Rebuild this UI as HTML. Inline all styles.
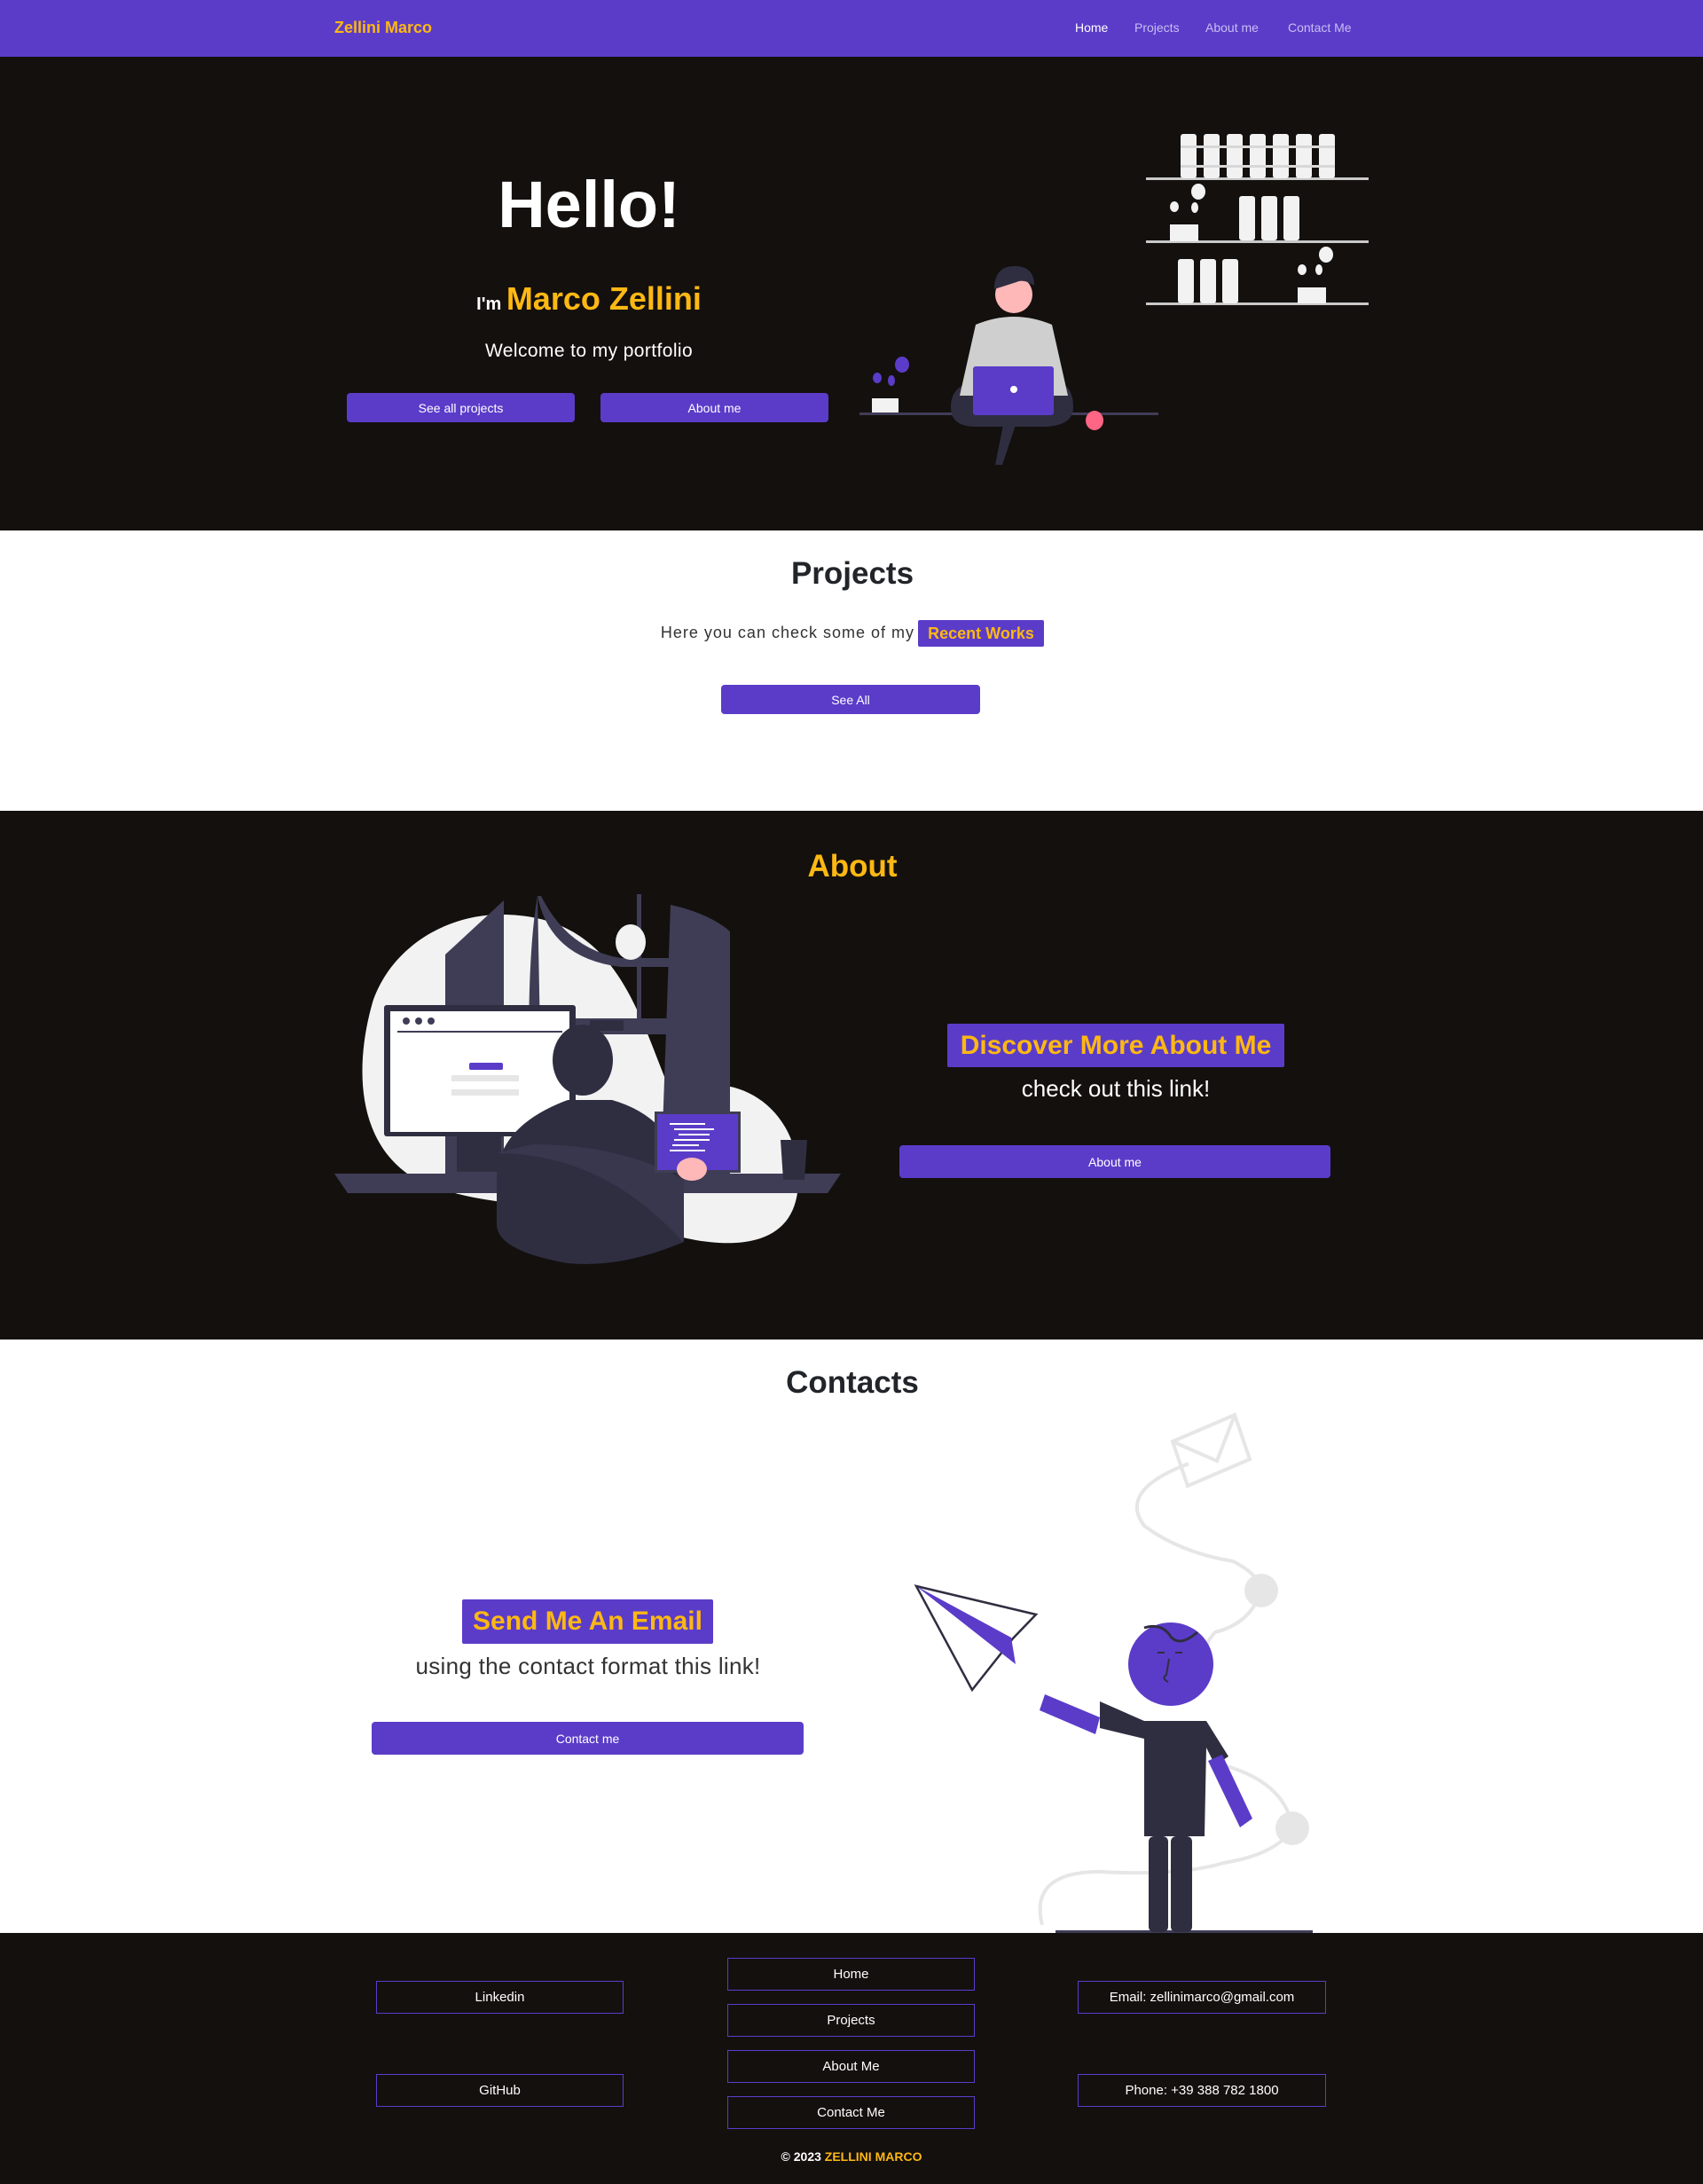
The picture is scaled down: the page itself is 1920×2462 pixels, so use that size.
<!DOCTYPE html>
<html><head><meta charset="utf-8"><style>
*{margin:0;padding:0;box-sizing:border-box}
body{width:1920px;height:2462px;font-family:"Liberation Sans",sans-serif;background:#fff;position:relative;overflow:hidden}
.abs{position:absolute}
.c{position:absolute;transform:translateX(-50%);white-space:nowrap;text-align:center}
.btn{position:absolute;background:#5b3cc9;color:#fff;font-size:14px;display:flex;align-items:center;justify-content:center;border-radius:4px}
.fb{position:absolute;border:1.5px solid #5b3cc9;color:#fff;font-size:15px;display:flex;align-items:center;justify-content:center}
.y{color:#fdb813}
.badge{position:absolute;background:#5b3cc9;color:#fdb813;font-weight:bold;display:flex;align-items:center;justify-content:center;border-radius:2px}
</style></head><body>
<!-- nav -->
<div class="abs" style="left:0;top:0;width:1920px;height:64px;background:#5b3cc9"></div>
<div class="abs y" style="left:377px;top:21px;font-size:18px;font-weight:bold">Zellini Marco</div>
<div class="abs" style="left:1212px;top:23px;font-size:14px;color:#fff">Home</div>
<div class="abs" style="left:1279px;top:23px;font-size:14px;color:#c9bdf2">Projects</div>
<div class="abs" style="left:1359px;top:23px;font-size:14px;color:#c9bdf2">About me</div>
<div class="abs" style="left:1452px;top:23px;font-size:14px;color:#c9bdf2">Contact Me</div>

<!-- hero -->
<div class="abs" style="left:0;top:64px;width:1920px;height:534px;background:#14100e"></div>
<div class="c" style="left:664px;top:188px;font-size:74px;font-weight:bold;color:#fff">Hello!</div>
<div class="c" style="left:664px;top:316px;color:#fff;font-size:20px"><span style="font-weight:bold">I'm</span> <span class="y" style="font-size:36px;font-weight:bold">Marco Zellini</span></div>
<div class="c" style="left:664px;top:384px;font-size:21px;color:#fff;letter-spacing:0.4px">Welcome to my portfolio</div>
<div class="btn" style="left:391px;top:443px;width:257px;height:33px">See all projects</div>
<div class="btn" style="left:677px;top:443px;width:257px;height:33px">About me</div>
<svg class="abs" style="left:0;top:64px" width="1920" height="534" viewBox="0 0 1920 534">
<g fill="#c9c9c9"><rect x="1292" y="136" width="251" height="3"/><rect x="1292" y="207" width="251" height="3"/><rect x="1292" y="277" width="251" height="3"/></g>
<g fill="#f2f2f2">
<rect x="1331" y="87" width="18" height="50" rx="3"/><rect x="1357" y="87" width="18" height="50" rx="3"/><rect x="1383" y="87" width="18" height="50" rx="3"/><rect x="1409" y="87" width="18" height="50" rx="3"/><rect x="1435" y="87" width="18" height="50" rx="3"/><rect x="1461" y="87" width="18" height="50" rx="3"/><rect x="1487" y="87" width="18" height="50" rx="3"/>
<rect x="1397" y="157" width="18" height="50" rx="3"/><rect x="1422" y="157" width="18" height="50" rx="3"/><rect x="1447" y="157" width="18" height="50" rx="3"/>
<rect x="1328" y="228" width="18" height="50" rx="3"/><rect x="1353" y="228" width="18" height="50" rx="3"/><rect x="1378" y="228" width="18" height="50" rx="3"/>
<rect x="1319" y="189" width="32" height="19"/><ellipse cx="1351" cy="152" rx="8" ry="9"/><ellipse cx="1324" cy="169" rx="5" ry="6"/><ellipse cx="1347" cy="170" rx="4" ry="6"/>
<rect x="1463" y="260" width="32" height="18"/><ellipse cx="1495" cy="223" rx="8" ry="9"/><ellipse cx="1468" cy="240" rx="5" ry="6"/><ellipse cx="1487" cy="240" rx="4" ry="6"/>
<rect x="983" y="385" width="30" height="17"/></g>
<g fill="#d8d8d8"><rect x="1331" y="100" width="174" height="3"/><rect x="1331" y="122" width="174" height="3"/></g>
<rect x="969" y="401" width="337" height="3" fill="#3f3d56"/>
<ellipse cx="1017" cy="347" rx="8" ry="9" fill="#5b3cc9"/><ellipse cx="989" cy="362" rx="5" ry="6" fill="#5b3cc9"/><ellipse cx="1005" cy="365" rx="4" ry="6" fill="#5b3cc9"/>
<path d="M1072 395 q0 -30 40 -30 h70 q28 0 28 30 q0 20 -30 22 h-80 q-28 0 -28 -22z" fill="#2f2e41"/>
<path d="M1132 410 l-10 50 l8 0 l15 -45z" fill="#2f2e41"/>
<path d="M1100 302 q43 -18 86 0 l18 80 h-122z" fill="#cfcfcf"/>
<circle cx="1143" cy="268" r="21" fill="#ffb8b8"/>
<path d="M1121 262 q0 -26 23 -26 q22 0 22 22 q-12 -8 -20 -4 q-12 4 -25 8z" fill="#2f2e41"/>
<rect x="1097" y="349" width="91" height="55" rx="3" fill="#5b3cc9"/>
<circle cx="1143" cy="375" r="4" fill="#fff"/>
<ellipse cx="1234" cy="410" rx="10" ry="11" fill="#ff6584"/>
</svg>

<!-- projects -->
<div class="c" style="left:961px;top:627px;font-size:35px;font-weight:bold;color:#212529">Projects</div>
<div class="abs" style="right:889px;top:703px;font-size:18px;color:#333;white-space:nowrap;letter-spacing:1px">Here you can check some of my</div>
<div class="badge" style="left:1035px;top:699px;width:142px;height:30px;font-size:18px">Recent Works</div>
<div class="btn" style="left:813px;top:772px;width:292px;height:33px">See All</div>

<!-- about -->
<div class="abs" style="left:0;top:914px;width:1920px;height:596px;background:#14100e"></div>
<div class="c y" style="left:961px;top:957px;font-size:35px;font-weight:bold">About</div>
<svg class="abs" style="left:0;top:914px" width="1920" height="596" viewBox="0 914 1920 596">
<path d="M565 1031 C700 1031 720 1150 760 1240 C800 1200 900 1230 900 1330 C900 1420 800 1410 720 1380 C650 1350 560 1370 470 1330 C400 1290 400 1200 420 1130 C440 1070 500 1031 565 1031z" fill="#f2f2f2"/>
<path d="M502 1076 L568 1015 L568 1330 L502 1330z" fill="#3f3d56"/>
<path d="M606 1010 L612 1330 L600 1330 Q590 1100 606 1010z" fill="#3f3d56"/>
<path d="M606 1010 Q620 1080 700 1090 L760 1090 L760 1080 L700 1080 Q640 1070 610 1010z" fill="#3f3d56"/>
<path d="M756 1020 Q800 1030 823 1050 L823 1330 L745 1330z" fill="#3f3d56"/>
<rect x="718" y="1008" width="5" height="150" fill="#3f3d56"/>
<ellipse cx="711" cy="1062" rx="17" ry="20" fill="#f2f2f2"/>
<rect x="620" y="1148" width="200" height="18" fill="#3f3d56"/>
<rect x="433" y="1133" width="216" height="148" rx="3" fill="#2f2e41"/>
<rect x="440" y="1140" width="202" height="136" fill="#fff"/>
<rect x="448" y="1162" width="186" height="2" fill="#3f3d56"/>
<circle cx="458" cy="1151" r="4" fill="#3f3d56"/><circle cx="472" cy="1151" r="4" fill="#3f3d56"/><circle cx="486" cy="1151" r="4" fill="#3f3d56"/>
<rect x="529" y="1198" width="38" height="8" rx="2" fill="#5b3cc9"/>
<rect x="509" y="1212" width="76" height="7" fill="#e6e6e6"/><rect x="509" y="1228" width="76" height="7" fill="#e6e6e6"/>
<rect x="515" y="1281" width="50" height="40" fill="#2f2e41"/>
<path d="M377 1323 H948 L933 1345 H392z" fill="#3f3d56"/>
<path d="M560 1330 Q560 1270 640 1240 L690 1240 Q760 1260 771 1330 L771 1400 Q700 1430 640 1424 Q560 1410 560 1380z" fill="#2f2e41"/>
<path d="M560 1300 Q680 1300 770 1400 L771 1330 Q700 1290 600 1290z" fill="#3f3d56" opacity=".6"/>
<ellipse cx="657" cy="1195" rx="34" ry="40" fill="#2f2e41"/>
<rect x="665" y="1150" width="38" height="12" fill="#2f2e41"/>
<rect x="738" y="1253" width="97" height="69" fill="#3f3d56"/>
<rect x="741" y="1256" width="91" height="63" fill="#5b3cc9"/>
<g fill="#fff"><rect x="755" y="1266" width="40" height="2"/><rect x="760" y="1272" width="45" height="2"/><rect x="765" y="1278" width="35" height="2"/><rect x="760" y="1284" width="40" height="2"/><rect x="758" y="1290" width="30" height="2"/><rect x="755" y="1296" width="40" height="2"/></g>
<ellipse cx="780" cy="1318" rx="17" ry="13" fill="#ffb8b8"/>
<path d="M880 1285 h30 l-3 45 h-24z" fill="#2f2e41"/>
</svg>
<div class="badge" style="left:1068px;top:1154px;width:380px;height:49px;font-size:30px">Discover More About Me</div>
<div class="c" style="left:1258px;top:1212px;font-size:26px;color:#fff">check out this link!</div>
<div class="btn" style="left:1014px;top:1291px;width:486px;height:37px">About me</div>

<!-- contacts -->
<div class="c" style="left:961px;top:1539px;font-size:35px;font-weight:bold;color:#212529">Contacts</div>
<div class="badge" style="left:521px;top:1803px;width:283px;height:50px;font-size:30px">Send Me An Email</div>
<div class="c" style="left:663px;top:1863px;font-size:26px;color:#333;letter-spacing:0.3px">using the contact format this link!</div>
<div class="btn" style="left:419px;top:1941px;width:487px;height:37px">Contact me</div>
<svg class="abs" style="left:0;top:1510px" width="1920" height="669" viewBox="0 1510 1920 669">
<g fill="none" stroke="#e6e6e6" stroke-width="4">
<path d="M1340 1650 Q1260 1680 1290 1720 Q1330 1750 1390 1760 Q1420 1775 1422 1793 Q1410 1830 1370 1840 Q1350 1860 1360 1900"/>
<path d="M1380 1990 Q1450 2010 1457 2061 Q1440 2090 1380 2100 Q1330 2115 1240 2110 Q1160 2110 1175 2170"/>
<path d="M1322 1625 l70 -30 l17 50 l-70 30z M1322 1625 l50 22 l20 -52"/>
</g>
<ellipse cx="1422" cy="1793" rx="19" ry="19" fill="#e6e6e6"/>
<ellipse cx="1457" cy="2061" rx="19" ry="19" fill="#e6e6e6"/>
<path d="M1033 1788 L1168 1820 L1142 1847 L1096 1905z" fill="#fff" stroke="#2f2e41" stroke-width="2.5"/>
<path d="M1033 1788 L1140 1846 L1145 1876z" fill="#5b3cc9"/>
<rect x="1190" y="2176" width="290" height="3" fill="#3f3d56"/>
<path d="M1178 1910 L1240 1936 L1235 1955 L1172 1928z" fill="#5b3cc9"/>
<path d="M1240 1918 L1290 1940 L1360 1940 L1385 1980 L1370 1990 L1360 1970 L1358 2070 L1290 2070 L1290 1960 L1240 1948z" fill="#2f2e41"/>
<path d="M1362 1985 L1378 1978 L1412 2050 L1398 2060z" fill="#5b3cc9"/>
<rect x="1295" y="2070" width="22" height="108" rx="6" fill="#2f2e41"/>
<rect x="1320" y="2070" width="24" height="108" rx="6" fill="#2f2e41"/>
<ellipse cx="1320" cy="1876" rx="48" ry="47" fill="#5b3cc9"/>
<path d="M1290 1835 q20 -6 30 10 q10 12 30 -5" fill="none" stroke="#2f2e41" stroke-width="3"/>
<path d="M1318 1870 l-3 18 q-6 4 2 8 M1305 1863 h8 M1325 1863 h8" fill="none" stroke="#2f2e41" stroke-width="2"/>
</svg>

<!-- footer -->
<div class="abs" style="left:0;top:2179px;width:1920px;height:283px;background:#14100e"></div>
<div class="fb" style="left:424px;top:2233px;width:279px;height:37px">Linkedin</div>
<div class="fb" style="left:424px;top:2338px;width:279px;height:37px">GitHub</div>
<div class="fb" style="left:820px;top:2207px;width:279px;height:37px">Home</div>
<div class="fb" style="left:820px;top:2259px;width:279px;height:37px">Projects</div>
<div class="fb" style="left:820px;top:2311px;width:279px;height:37px">About Me</div>
<div class="fb" style="left:820px;top:2363px;width:279px;height:37px">Contact Me</div>
<div class="fb" style="left:1215px;top:2233px;width:280px;height:37px">Email: zellinimarco@gmail.com</div>
<div class="fb" style="left:1215px;top:2338px;width:280px;height:37px">Phone: +39 388 782 1800</div>
<div class="c" style="left:960px;top:2423px;font-size:14px;font-weight:bold;color:#fff">© 2023 <span class="y">ZELLINI MARCO</span></div>
</body></html>
